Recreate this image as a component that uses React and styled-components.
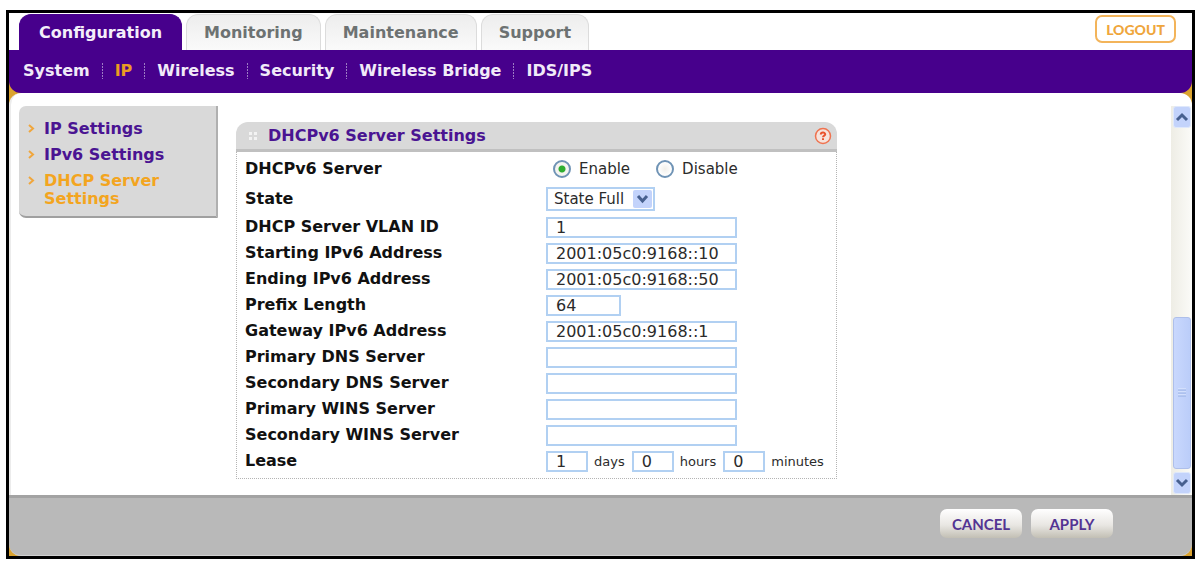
import React from "react";
import styled, { createGlobalStyle, css } from "styled-components";

const GlobalStyle = createGlobalStyle`
  *, *::before, *::after { box-sizing: border-box; }
  body {
    margin: 0;
    background: #fff;
    color: #111;
    font-family: "DejaVu Sans", Verdana, sans-serif;
    font-size: 16px;
  }
  button, input, select { font-family: inherit; margin: 0; }
`;

const Page = styled.div`
  padding: 10px 6px 3px;
`;

const Frame = styled.div`
  border: 3px solid #000;
  background: #dba32f;
`;

const TabBar = styled.header`
  display: flex;
  align-items: flex-end;
  gap: 4px;
  height: 37px;
  padding: 0 16px 0 10px;
  background: #fff;
`;

const Tab = styled.a`
  height: 36px;
  padding: 0 17px;
  border: 1px solid #dcdcdc;
  border-bottom: 0;
  border-radius: 12px 12px 0 0;
  background: linear-gradient(#ededed, #fafafa);
  color: #6d7272;
  font-weight: bold;
  line-height: 36px;
  text-decoration: none;
  ${(p) =>
    p.$active &&
    css`
      padding: 0 19px;
      border-color: #47008c;
      background: #47008c;
      color: #f4eefa;
    `}
`;

const Logout = styled.button`
  align-self: flex-start;
  width: 81px;
  height: 28px;
  margin: 2px 0 0 auto;
  padding: 0;
  border: 2px solid #f3b45a;
  border-radius: 7px;
  background: #fff;
  color: #efa63c;
  font: 900 14px Lato, sans-serif;
`;

const Nav = styled.nav`
  display: flex;
  align-items: center;
  height: 43px;
  padding: 0 14px 2px;
  border-radius: 0 0 12px 12px;
  background: #47008c;
`;

const NavLink = styled.a`
  color: ${(p) => (p.$active ? "#eb9c22" : "#f1eaf8")};
  font-weight: bold;
  line-height: 20px;
  text-decoration: none;
  & + & {
    margin-left: 12px;
    padding-left: 13px;
    background: repeating-linear-gradient(#9d7cc4 0 2px, transparent 2px 3px) 0 2px / 1px 16px no-repeat;
  }
`;

const Body = styled.main`
  display: flex;
  align-items: flex-start;
  min-height: 402px;
  border-left: 2px solid #ececec;
  border-radius: 12px 12px 0 0;
  background: #fff;
  padding: 13px 0 0 8px;
`;

const SideMenu = styled.ul`
  flex: none;
  width: 199px;
  margin: 0 18px 0 0;
  padding: 14px 10px 0 9px;
  border-right: 2px solid #b0b0b0;
  border-bottom: 2px solid #a0a0a0;
  border-radius: 7px 0 0 7px;
  background: #d9d9d9;
  list-style: none;
`;

const SideItem = styled.li`
  display: flex;
  gap: 9px;
  margin-bottom: 8px;
  svg { flex: none; margin-top: 4px; }
`;

const SideLink = styled.a`
  color: ${(p) => (p.$active ? "#f3a51f" : "#4a1492")};
  font-weight: bold;
  line-height: 18px;
  text-decoration: none;
`;

const Panel = styled.section`
  flex: 0 1 601px;
  margin: 16px 0;
`;

const PanelHeader = styled.div`
  display: flex;
  align-items: center;
  height: 30px;
  padding: 0 5px 0 12px;
  border-bottom: 3px solid #c0c0c0;
  border-radius: 12px 12px 0 0;
  background: #d9d9d9;
`;

const PanelTitle = styled.h1`
  flex: 1;
  margin: 0 0 0 10px;
  color: #4a1492;
  font-size: 16px;
  line-height: 20px;
`;

const HelpButton = styled.button`
  display: flex;
  padding: 0;
  border: 0;
  background: none;
`;

const Form = styled.form`
  padding: 2px 8px 4px;
  border: 1px dotted #b4b4b4;
  border-top: 0;
`;

const Row = styled.div`
  display: grid;
  grid-template-columns: 301px 1fr;
  align-items: center;
  height: ${(p) => (p.$tall ? 30 : 26)}px;
`;

const Label = styled.label`
  font-weight: bold;
  line-height: 20px;
  white-space: nowrap;
`;

const Controls = styled.div`
  display: flex;
  align-items: center;
  white-space: nowrap;
`;

const TextInput = styled.input`
  width: ${(p) => p.$width || 191}px;
  height: 21px;
  padding: 0 8px;
  border: 2px solid #b1d0f2;
  background: #fff;
  color: #2b2b2b;
  font-size: 16px;
`;

const Choice = styled.label`
  display: flex;
  align-items: center;
  gap: 8px;
  margin: 0 19px 0 7px;
  color: #2b2b2b;
  font-size: 15px;
`;

const Radio = styled.input`
  appearance: none;
  width: 18px;
  height: 18px;
  border: 2px solid #6f93b5;
  border-radius: 50%;
  background: radial-gradient(
    circle,
    ${(p) => (p.defaultChecked ? "#2fae2f 0 3px, #f4f4f0 4px" : "#f1efea 0, #fff 7px")}
  );
`;

const SelectBox = styled.div`
  position: relative;
  display: flex;
  svg { position: absolute; top: 3px; right: 3px; pointer-events: none; }
`;

const Select = styled.select`
  appearance: none;
  width: 109px;
  height: 24px;
  padding: 0 22px 0 6px;
  border: 2px solid #b1d0f2;
  border-radius: 0;
  background: #fff;
  color: #2b2b2b;
  font-size: 15px;
`;

const Unit = styled.label`
  margin: 0 7px 0 6px;
  color: #2b2b2b;
  font-size: 13px;
  &:last-child { margin-right: 0; }
`;

const ScrollBar = styled.div`
  display: flex;
  flex-direction: column;
  align-self: stretch;
  width: 21px;
  margin-left: auto;
  padding: 0 1px 1px 2px;
  background: linear-gradient(90deg, #eeede5, #fbfbf8);
`;

const ScrollButton = styled.button`
  display: flex;
  align-items: center;
  justify-content: center;
  height: 22px;
  padding: 0;
  border: 1px solid #dfe8fb;
  border-radius: 3px;
  background: #c3d3fb;
`;

const Thumb = styled.div`
  display: flex;
  align-items: center;
  justify-content: center;
  height: 152px;
  margin: auto 0 3px;
  border: 1px solid #aebfea;
  border-radius: 3px;
  background: linear-gradient(90deg, #c9d8fd, #bbcdf9);
`;

const Footer = styled.footer`
  display: flex;
  justify-content: flex-end;
  align-items: flex-start;
  gap: 9px;
  height: 61px;
  padding: 11px 79px 0 0;
  border-top: 3px solid #a3a3a3;
  border-bottom: 1px solid #d0d0d0;
  border-radius: 0 0 12px 12px;
  background: #b9b9b9;
`;

const ActionButton = styled.button`
  width: 82px;
  height: 29px;
  padding: 0;
  border: 0;
  border-radius: 7px;
  background: linear-gradient(#fff, #e9e7e3 55%, #c2bfb4);
  color: #533493;
  font: bold 15px Lato, sans-serif;
`;

const Arrow = () => (
  <svg width="7" height="9" viewBox="0 0 7 9" aria-hidden="true">
    <path d="M1 1L5 4.500L1 8" fill="none" stroke="#f0a63c" strokeWidth="2" />
  </svg>
);

const Chevron = ({ up }) => (
  <svg width="14" height="10" viewBox="0 0 14 10" aria-hidden="true">
    <path d={up ? "M2 8L7 3L12 8" : "M2 2L7 7L12 2"} fill="none" stroke="#47608f" strokeWidth="3" />
  </svg>
);

const fields = [
  ["vlan", "DHCP Server VLAN ID", "1"],
  ["start", "Starting IPv6 Address", "2001:05c0:9168::10"],
  ["end", "Ending IPv6 Address", "2001:05c0:9168::50"],
  ["prefix", "Prefix Length", "64", 75],
  ["gateway", "Gateway IPv6 Address", "2001:05c0:9168::1"],
  ["dns1", "Primary DNS Server", ""],
  ["dns2", "Secondary DNS Server", ""],
  ["wins1", "Primary WINS Server", ""],
  ["wins2", "Secondary WINS Server", ""],
];

const leaseParts = [
  ["days", "1"],
  ["hours", "0"],
  ["minutes", "0"],
];

export default function App() {
  return (
    <Page>
      <GlobalStyle />
      <Frame>
        <TabBar>
          {["Configuration", "Monitoring", "Maintenance", "Support"].map((t, i) => (
            <Tab key={t} href="#" $active={i === 0}>{t}</Tab>
          ))}
          <Logout type="button">LOGOUT</Logout>
        </TabBar>
        <Nav>
          {["System", "IP", "Wireless", "Security", "Wireless Bridge", "IDS/IPS"].map((t) => (
            <NavLink key={t} href="#" $active={t === "IP"}>{t}</NavLink>
          ))}
        </Nav>
        <Body>
          <SideMenu>
            {["IP Settings", "IPv6 Settings", "DHCP Server Settings"].map((t, i) => (
              <SideItem key={t}>
                <Arrow />
                <SideLink href="#" $active={i === 2}>{t}</SideLink>
              </SideItem>
            ))}
          </SideMenu>
          <Panel>
            <PanelHeader>
              <svg width="10" height="10" viewBox="0 0 10 10" aria-hidden="true">
                <path d="M1 1h3v3h-3zM6 1h3v3h-3zM1 6h3v3h-3zM6 6h3v3h-3z" fill="#f3f3f3" />
              </svg>
              <PanelTitle>DHCPv6 Server Settings</PanelTitle>
              <HelpButton type="button" aria-label="Help">
                <svg width="18" height="18" viewBox="0 0 18 18">
                  <circle cx="9" cy="9" r="7.500" fill="#f6e3dc" stroke="#ef7350" strokeWidth="1.500" />
                  <path d="M6.800 7.500C6.800 5 11.200 5 11.200 7.200C11.200 8.700 9 8.500 9 10.300M9 11.300V13" fill="none" stroke="#e9532d" strokeWidth="2" />
                </svg>
              </HelpButton>
            </PanelHeader>
            <Form>
              <Row $tall>
                <Label as="span" id="server-label">DHCPv6 Server</Label>
                <Controls role="radiogroup" aria-labelledby="server-label">
                  <Choice><Radio type="radio" name="server" defaultChecked />Enable</Choice>
                  <Choice><Radio type="radio" name="server" />Disable</Choice>
                </Controls>
              </Row>
              <Row $tall>
                <Label htmlFor="state">State</Label>
                <Controls>
                  <SelectBox>
                    <Select id="state"><option>State Full</option></Select>
                    <svg width="19" height="18" viewBox="0 0 19 18" aria-hidden="true">
                      <rect width="19" height="18" rx="2" fill="#c3d3fb" />
                      <path d="M5 6L9.500 11L14 6" fill="none" stroke="#47608f" strokeWidth="3" />
                    </svg>
                  </SelectBox>
                </Controls>
              </Row>
              {fields.map(([id, label, value, width]) => (
                <Row key={id}>
                  <Label htmlFor={id}>{label}</Label>
                  <Controls><TextInput id={id} type="text" defaultValue={value} $width={width} /></Controls>
                </Row>
              ))}
              <Row>
                <Label as="span" id="lease-label">Lease</Label>
                <Controls role="group" aria-labelledby="lease-label">
                  {leaseParts.map(([unit, value]) => (
                    <React.Fragment key={unit}>
                      <TextInput id={unit} type="text" defaultValue={value} $width={42} />
                      <Unit htmlFor={unit}>{unit}</Unit>
                    </React.Fragment>
                  ))}
                </Controls>
              </Row>
            </Form>
          </Panel>
          <ScrollBar>
            <ScrollButton type="button" aria-label="Scroll up"><Chevron up /></ScrollButton>
            <Thumb>
              <svg width="10" height="10" viewBox="0 0 10 10" aria-hidden="true">
                <path d="M1 1H9M1 4H9M1 7H9" stroke="#e4edff" />
                <path d="M1 2H9M1 5H9M1 8H9" stroke="#98b0e4" />
              </svg>
            </Thumb>
            <ScrollButton type="button" aria-label="Scroll down"><Chevron /></ScrollButton>
          </ScrollBar>
        </Body>
        <Footer>
          <ActionButton type="button">CANCEL</ActionButton>
          <ActionButton type="button">APPLY</ActionButton>
        </Footer>
      </Frame>
    </Page>
  );
}
